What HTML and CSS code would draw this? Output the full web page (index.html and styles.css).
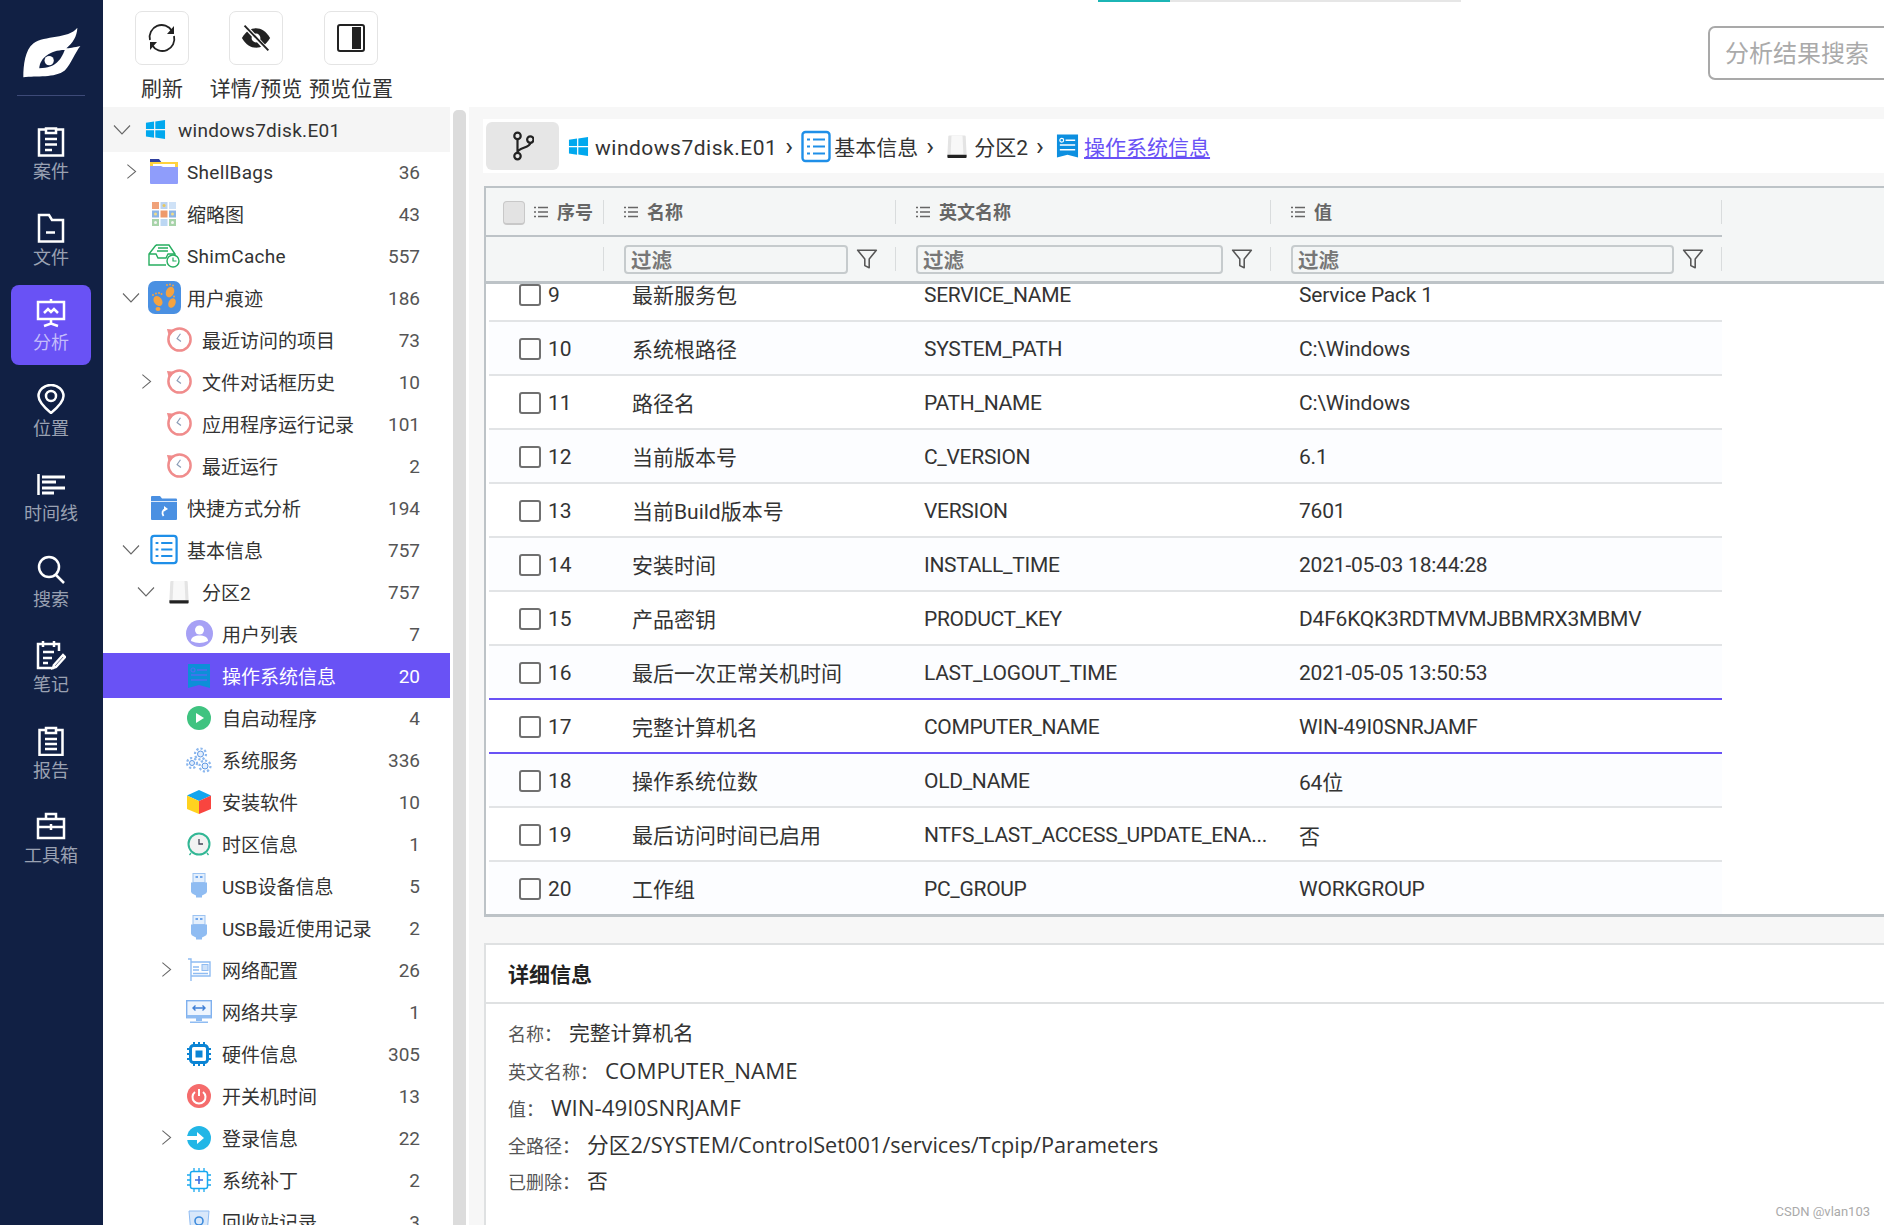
FILE: index.html
```html
<!DOCTYPE html>
<html lang="zh-CN">
<head>
<meta charset="utf-8">
<title>分析</title>
<link rel="stylesheet" href="styles.css">
</head>
<body>
<svg class="defs" aria-hidden="true">
  <symbol id="i-win" viewBox="0 0 22 22"><path fill="#00a8ee" d="M1 4l8.500-1.300v7.800H1zM10.800 2.500L21 1v9.500H10.800zM1 11.800h8.500v7.800L1 18.400zM10.800 11.800H21V21l-10.200-1.500z"/></symbol>
  <symbol id="i-disk" viewBox="0 0 24 26"><path fill="#e4e4e4" d="M3.500 1h17a1 1 0 0 1 1 1l1 20h-21l1-20a1 1 0 0 1 1-1z"/><path fill="#f8f8f8" d="M6 1h12l1 21H5z"/><path fill="#222" d="M1.500 22h21v2.500a1 1 0 0 1-1 1h-19a1 1 0 0 1-1-1z"/></symbol>
  <symbol id="i-list" viewBox="0 0 30 32"><rect x="1.500" y="1.500" width="27" height="29" rx="3" fill="#fff" stroke="#1f8fe8" stroke-width="2.400"/><path stroke="#1f8fe8" stroke-width="2" d="M6 9h3M12 9h12M6 16h3M12 16h12M6 23h3M12 23h12"/></symbol>
  <symbol id="i-book" viewBox="0 0 24 24"><path fill="#0d8fe0" d="M1 0h22v24l-11-3-11 3z"/><circle cx="6" cy="6" r="2" fill="none" stroke="#fff" stroke-width="1.200"/><path stroke="#fff" stroke-width="1.500" d="M10 6h10M4 11h16M4 16h16"/></symbol>
  <symbol id="i-book-sel" viewBox="0 0 24 24"><path fill="#0d8fd8" d="M1 0h22v24l-11-3-11 3z"/><circle cx="6" cy="6" r="2" fill="none" stroke="#4f6ff0" stroke-width="1.200"/><path stroke="#4f6ff0" stroke-width="1.500" d="M10 6h10M4 11h16M4 16h16"/></symbol>
  <symbol id="i-hist" viewBox="0 0 28 28"><circle cx="14" cy="14" r="11.500" fill="#fff" stroke="#f08c8c" stroke-width="2.600"/><path fill="#f08c8c" d="M1 3l8 1-6 7z"/><path fill="none" stroke="#8a9bb5" stroke-width="1.200" d="M15 8l-3.500 5 4 3"/></symbol>
  <symbol id="i-usb" viewBox="3 .5 18 25"><rect x="6" y="1" width="12" height="9" fill="#e4effc" stroke="#9cc3f2"/><rect x="8.500" y="3.500" width="2.500" height="2" fill="#6ea6ec"/><rect x="13" y="3.500" width="2.500" height="2" fill="#6ea6ec"/><path fill="#8fbcf2" d="M4 10h16v9q0 2-3 3l-2 1v2H9v-2l-2-1q-3-1-3-3z"/></symbol>
  <symbol id="i-lines" viewBox="0 0 14 12"><path stroke="#666" stroke-width="1.500" d="M0 1.500h2M4 1.500h10M0 6h2M4 6h10M0 10.500h2M4 10.500h10"/></symbol>
  <symbol id="i-funnel" viewBox="0 0 20 20"><path fill="none" stroke="#555" stroke-width="1.400" stroke-linejoin="round" d="M1.500 2h17l-6.500 8v8l-4-2v-6z"/></symbol>
  <symbol id="i-chev-r" viewBox="0 0 12 18"><path fill="none" stroke="#666" stroke-width="1.100" d="M1.500 1.500l9 7.500-9 7.500"/></symbol>
  <symbol id="i-chev-d" viewBox="0 0 18 12"><path fill="none" stroke="#666" stroke-width="1.100" d="M1 1.500l8 8.500 8-8.500"/></symbol>
</svg>

<aside class="nav">
  <svg class="logo" viewBox="60 75 190 165"><path fill="#fff" d="M70 232C70 195 75 150 100 130 135 105 205 118 233 83 232 110 218 130 200 145 205 145 225 142 242 138 225 160 215 190 195 212 165 235 110 228 70 232Z"/><path fill="#112044" d="M118 205C120 175 150 150 195 150 185 175 170 205 118 205Z"/><circle cx="148" cy="182" r="14" fill="#fff"/></svg>
  <div class="nav-rule"></div>
  <div class="nav-item">
    <svg class="nav-icon" viewBox="0 0 30 30"><path class="ns" d="M10 2.500H3v26h24v-26h-7M10 1.500h10V6H10zM9 12h12M9 17.500h12M9 23h7"/></svg>
    <span>案件</span>
  </div>
  <div class="nav-item">
    <svg class="nav-icon" viewBox="0 0 30 30"><path class="ns" d="M3 28.500V2h10l3 5h11v21.500zM10 19.500h9"/></svg>
    <span>文件</span>
  </div>
  <div class="nav-item active">
    <svg class="nav-icon" viewBox="0 0 30 30"><path class="ns" d="M2 4h26v17H2zM15 1v3M15 21v6M8 28l7-2.500 7 2.500M8 15l4-4 3 3 3-3 4 4"/></svg>
    <span>分析</span>
  </div>
  <div class="nav-item">
    <svg class="nav-icon" viewBox="0 0 30 30"><path class="ns" d="M15 29C9 24 2.500 18 2.500 12a12.500 11 0 0 1 25 0c0 6-6.500 12-12.500 17z"/><circle class="ns" cx="15" cy="12" r="5"/></svg>
    <span>位置</span>
  </div>
  <div class="nav-item">
    <svg class="nav-icon" viewBox="0 0 30 30"><path class="ns" d="M2.500 5v21"/><path class="ns thick" d="M6 8h23M6 13h14M6 19h23M6 24h12"/></svg>
    <span>时间线</span>
  </div>
  <div class="nav-item">
    <svg class="nav-icon" viewBox="0 0 30 30"><circle class="ns" cx="13" cy="12" r="10"/><path class="ns" d="M20 20l8 8"/></svg>
    <span>搜索</span>
  </div>
  <div class="nav-item">
    <svg class="nav-icon" viewBox="0 0 30 30"><path class="ns" d="M23 11V4H2v24h16M7 1v6M18 1v6M7 12h11M7 18h9M7 23h5M18 25l9-10 2 2-9 10-3 1z"/></svg>
    <span>笔记</span>
  </div>
  <div class="nav-item">
    <svg class="nav-icon" viewBox="0 0 30 30"><path class="ns" d="M10 4H3.500v25h23V4H20M10 2h10v5H10zM9 13h12M9 18h12M9 23h12"/></svg>
    <span>报告</span>
  </div>
  <div class="nav-item">
    <svg class="nav-icon" viewBox="0 0 30 30"><path class="ns" d="M2 8h26v19H2zM10 8V3h10v5M2 16h26M15 13v6"/></svg>
    <span>工具箱</span>
  </div>
</aside>

<main class="main">
  <div class="tabline"><i class="tab-on"></i><i class="tab-off"></i></div>
  <header class="toolbar">
    <div class="tools">
      <div class="tool tool-a">
        <div class="tool-btn"><svg viewBox="0 0 30 30"><path fill="none" stroke="#222" stroke-width="1.800" d="M3 17A12 12 0 0 1 25 8M27 13A12 12 0 0 1 5 22"/><path fill="#222" d="M27 3v8h-7zM3 27v-8h7z"/></svg></div>
        <span>刷新</span>
      </div>
      <div class="tool tool-b">
        <div class="tool-btn"><svg viewBox="0 0 34 30"><path fill="#222" d="M1 15C6 7 11 4 17 4s11 3 16 11c-5 8-10 11-16 11S6 23 1 15z"/><circle cx="17" cy="15" r="5" fill="#fff"/><path stroke="#fff" stroke-width="5" d="M5 2l24 26"/><path stroke="#222" stroke-width="2.200" d="M4 1l27 28"/></svg></div>
        <span>详情/预览</span>
      </div>
      <div class="tool tool-c">
        <div class="tool-btn"><svg viewBox="0 0 30 30"><rect x="2" y="2" width="26" height="26" rx="2" fill="none" stroke="#222" stroke-width="2"/><rect x="16" y="4" width="9" height="22" fill="#222"/></svg></div>
        <span>预览位置</span>
      </div>
    </div>
    <div class="search">分析结果搜索</div>
  </header>

  <div class="content">
    <section class="tree">
      <div class="row l0 head"><svg class="chev-d"><use href="#i-chev-d"/></svg><span class="ico"><svg class="s21"><use href="#i-win"/></svg></span><span class="name latin">windows7disk.E01</span></div>

      <div class="row l1"><svg class="chev-r"><use href="#i-chev-r"/></svg><span class="ico"><svg class="s30" viewBox="0 0 30 26"><path fill="#2f3f9e" d="M1 0h9l3 4H1z"/><path fill="#ffd23f" d="M1 3h28v5H1z"/><path fill="#fff" d="M4 5h22v4H4z"/><path fill="#8f9dfb" d="M1 7h11l2 1h15v16a1 1 0 0 1-1 1H2a1 1 0 0 1-1-1z"/></svg></span><span class="name latin">ShellBags</span><span class="count">36</span></div>

      <div class="row l1"><svg class="chev-none"></svg><span class="ico"><svg class="s26" viewBox="0 0 26 26"><g><rect x="1" y="1" width="7" height="7" fill="#f0a27a"/><rect x="9.500" y="1" width="7" height="7" fill="#bcd3ef"/><rect x="18" y="1" width="7" height="7" fill="#cfe2f7"/><rect x="1" y="9.500" width="7" height="7" fill="#8db6e6"/><rect x="9.500" y="9.500" width="7" height="7" fill="#ee9a6c"/><rect x="18" y="9.500" width="7" height="7" fill="#8db6e6"/><rect x="1" y="18" width="7" height="7" fill="#a7d3a9"/><rect x="9.500" y="18" width="7" height="7" fill="#bcd7f3"/><rect x="18" y="18" width="7" height="7" fill="#a7d3a9"/></g><circle cx="13" cy="4.500" r="1.500" fill="#e9c75c"/><circle cx="4.500" cy="13" r="1.500" fill="#f0dc88"/><circle cx="21.500" cy="13" r="1.500" fill="#f0dc88"/><circle cx="4.500" cy="21.500" r="1.500" fill="#f4f4f4"/><circle cx="21.500" cy="21.500" r="1.500" fill="#f4f4f4"/></svg></span><span class="name">缩略图</span><span class="count">43</span></div>

      <div class="row l1"><svg class="chev-none"></svg><span class="ico"><svg class="s32" viewBox="0 0 32 24"><path fill="none" stroke="#27ae60" stroke-width="1.400" d="M8 1h13l6 9v4M8 1L1 10v11h17M1 10h7l2 4h8l2-4h7M10 4h10M9 7h11"/><circle cx="25" cy="17" r="6" fill="#fff" stroke="#27ae60" stroke-width="1.400"/><path fill="none" stroke="#27ae60" stroke-width="1.200" d="M25 13.500V17h3.500"/></svg></span><span class="name latin">ShimCache</span><span class="count">557</span></div>

      <div class="row l1"><svg class="chev-d"><use href="#i-chev-d"/></svg><span class="ico"><svg class="s33" viewBox="0 0 33 33"><rect width="33" height="33" rx="7" fill="#4a90e2"/><g fill="#f5a341"><ellipse cx="10" cy="20" rx="4" ry="5.500" transform="rotate(-35 10 20)"/><circle cx="5" cy="14" r="1"/><circle cx="8" cy="12.500" r="1"/><circle cx="11" cy="12" r="1"/><circle cx="13.500" cy="13" r="1"/><ellipse cx="22" cy="11" rx="4" ry="5.500" transform="rotate(25 22 11)"/><circle cx="19" cy="4" r="1"/><circle cx="22" cy="3.500" r="1"/><circle cx="25" cy="4.500" r="1"/><ellipse cx="24" cy="22" rx="3.500" ry="5" transform="rotate(25 24 22)"/><circle cx="26" cy="15.500" r="1"/><ellipse cx="10" cy="28" rx="2.500" ry="2"/></g></svg></span><span class="name">用户痕迹</span><span class="count">186</span></div>

      <div class="row l2"><svg class="chev-none"></svg><span class="ico"><svg class="s26h"><use href="#i-hist"/></svg></span><span class="name">最近访问的项目</span><span class="count">73</span></div>
      <div class="row l2"><svg class="chev-r"><use href="#i-chev-r"/></svg><span class="ico"><svg class="s26h"><use href="#i-hist"/></svg></span><span class="name">文件对话框历史</span><span class="count">10</span></div>
      <div class="row l2"><svg class="chev-none"></svg><span class="ico"><svg class="s26h"><use href="#i-hist"/></svg></span><span class="name">应用程序运行记录</span><span class="count">101</span></div>
      <div class="row l2"><svg class="chev-none"></svg><span class="ico"><svg class="s26h"><use href="#i-hist"/></svg></span><span class="name">最近运行</span><span class="count">2</span></div>

      <div class="row l1"><svg class="chev-none"></svg><span class="ico"><svg class="s26" viewBox="0 0 26 24"><path fill="#4a90e2" d="M0 1a1 1 0 0 1 1-1h8l2 2.500h14a1 1 0 0 1 1 1V23a1 1 0 0 1-1 1H1a1 1 0 0 1-1-1z"/><path stroke="#fff" stroke-width=".8" d="M0 5.500h26"/><path fill="none" stroke="#fff" stroke-width="1.800" d="M12.500 20c-2-3-1-6 2-7"/><path fill="#fff" d="M13 10l4 3-4 2.500z"/></svg></span><span class="name">快捷方式分析</span><span class="count">194</span></div>

      <div class="row l1"><svg class="chev-d"><use href="#i-chev-d"/></svg><span class="ico"><svg class="s28x32"><use href="#i-list"/></svg></span><span class="name">基本信息</span><span class="count">757</span></div>

      <div class="row l2"><svg class="chev-d"><use href="#i-chev-d"/></svg><span class="ico"><svg class="s22"><use href="#i-disk"/></svg></span><span class="name">分区2</span><span class="count">757</span></div>

      <div class="row l3"><svg class="chev-none"></svg><span class="ico"><svg class="s27" viewBox="0 0 27 27"><circle cx="13.500" cy="13.500" r="13.500" fill="#a6a0f5"/><circle cx="13.500" cy="10" r="4.500" fill="#fff"/><path fill="#fff" d="M5 21c0-4 4-5.500 8.500-5.500S22 17 22 21q-8.500 4-17 0z"/></svg></span><span class="name">用户列表</span><span class="count">7</span></div>

      <div class="row l3 selected"><svg class="chev-none"></svg><span class="ico"><svg class="s24"><use href="#i-book-sel"/></svg></span><span class="name">操作系统信息</span><span class="count">20</span></div>

      <div class="row l3"><svg class="chev-none"></svg><span class="ico"><svg class="s24" viewBox="0 0 24 24"><circle cx="12" cy="12" r="12" fill="#3fc380"/><path fill="#fff" d="M9 7l8 5-8 5z"/></svg></span><span class="name">自启动程序</span><span class="count">4</span></div>

      <div class="row l3"><svg class="chev-none"></svg><span class="ico"><svg class="s26" viewBox="0 0 26 26"><g fill="none" stroke="#8db8ee" stroke-width="2.200" stroke-dasharray="2.200 2"><circle cx="14.500" cy="7" r="5.500"/><circle cx="6" cy="16" r="5"/><circle cx="19" cy="19" r="5.500"/></g><g fill="#e4effc" stroke="#5d97e4"><circle cx="14.500" cy="7" r="3"/><circle cx="6" cy="16" r="2.500"/><circle cx="19" cy="19" r="3"/></g></svg></span><span class="name">系统服务</span><span class="count">336</span></div>

      <div class="row l3"><svg class="chev-none"></svg><span class="ico"><svg class="s24" viewBox="0 0 24 24"><path fill="#12a5ee" d="M12 0l12 5.500L12 11 0 5.500z"/><path fill="#ffd21f" d="M0 5.500L12 11v13L0 19z"/><path fill="#f9453f" d="M24 5.500L12 11v13l12-5z"/></svg></span><span class="name">安装软件</span><span class="count">10</span></div>

      <div class="row l3"><svg class="chev-none"></svg><span class="ico"><svg class="s24" viewBox="0 0 24 24"><circle cx="12" cy="12" r="10.500" fill="#f2f2f2" stroke="#32b795" stroke-width="2"/><path fill="none" stroke="#445" stroke-width="1.300" d="M12 7v5h4"/><path stroke="#32b795" stroke-width="1.300" d="M4 21l-1.500 2M20 21l1.500 2"/></svg></span><span class="name">时区信息</span><span class="count">1</span></div>

      <div class="row l3"><svg class="chev-none"></svg><span class="ico"><svg class="s-usb"><use href="#i-usb"/></svg></span><span class="name">USB设备信息</span><span class="count">5</span></div>
      <div class="row l3"><svg class="chev-none"></svg><span class="ico"><svg class="s-usb"><use href="#i-usb"/></svg></span><span class="name">USB最近使用记录</span><span class="count">2</span></div>

      <div class="row l3"><svg class="chev-r"><use href="#i-chev-r"/></svg><span class="ico"><svg class="s24" viewBox="0 0 24 24"><path fill="none" stroke="#8fbcf2" stroke-width="1.400" d="M1 1h3v22M4 4h19v14H4"/><rect x="15" y="6.500" width="6" height="6" fill="#cfe2f9" stroke="#8fbcf2"/><path stroke="#8fbcf2" stroke-width="1.300" d="M6 9h6M6 12h6M6 15.500h15"/></svg></span><span class="name">网络配置</span><span class="count">26</span></div>

      <div class="row l3"><svg class="chev-none"></svg><span class="ico"><svg class="s26" viewBox="0 0 26 24"><rect x=".7" y=".7" width="24.600" height="17" fill="#eef5fe" stroke="#7fb0ee" stroke-width="1.400"/><path fill="#8fbcf2" d="M.7 15h24.600v3H.7zM10 18h6v3h-6zM4 21.500h18V23H4z"/><path fill="none" stroke="#3f7fd6" stroke-width="1.400" d="M7 8h12M9.500 5.500L7 8l2.500 2.500M16.500 5.500L19 8l-2.500 2.500"/></svg></span><span class="name">网络共享</span><span class="count">1</span></div>

      <div class="row l3"><svg class="chev-none"></svg><span class="ico"><svg class="s24" viewBox="0 0 24 24"><rect x="3.500" y="3.500" width="17" height="17" rx="3" fill="#fff" stroke="#0b84d4" stroke-width="3"/><rect x="8.500" y="8.500" width="7" height="7" fill="#0b84d4"/><path stroke="#0b84d4" stroke-width="2" d="M7 0v3M12 0v3M17 0v3M7 21v3M12 21v3M17 21v3M0 7h3M0 12h3M0 17h3M21 7h3M21 12h3M21 17h3"/></svg></span><span class="name">硬件信息</span><span class="count">305</span></div>

      <div class="row l3"><svg class="chev-none"></svg><span class="ico"><svg class="s24" viewBox="0 0 24 24"><circle cx="12" cy="12" r="12" fill="#f56c6c"/><path fill="none" stroke="#fff" stroke-width="2" d="M8 8a6.500 6.500 0 1 0 8 0M12 5v7"/></svg></span><span class="name">开关机时间</span><span class="count">13</span></div>

      <div class="row l3"><svg class="chev-r"><use href="#i-chev-r"/></svg><span class="ico"><svg class="s24" viewBox="0 0 24 24"><circle cx="12" cy="12" r="12" fill="#22b6e6"/><path fill="#fff" d="M0 10h10V6l7 6-7 6v-4H0z"/></svg></span><span class="name">登录信息</span><span class="count">22</span></div>

      <div class="row l3"><svg class="chev-none"></svg><span class="ico"><svg class="s24" viewBox="0 0 24 24"><rect x="3.500" y="3.500" width="17" height="17" rx="2" fill="#fff" stroke="#18a8f0" stroke-width="1.500"/><path stroke="#18a8f0" stroke-width="1.300" d="M7 0v3M12 0v3M17 0v3M7 21v3M12 21v3M17 21v3M0 7h3M0 12h3M0 17h3M21 7h3M21 12h3M21 17h3"/><path stroke="#3c6fe0" stroke-width="1.600" d="M8 12h8M12 8v8"/></svg></span><span class="name">系统补丁</span><span class="count">2</span></div>

      <div class="row l3"><svg class="chev-none"></svg><span class="ico"><svg class="s24" viewBox="0 0 24 24"><path fill="#d9e8fa" stroke="#8fbcf2" d="M2 1h20l-2 23H4z"/><circle cx="12" cy="11" r="4" fill="none" stroke="#3d8bdc" stroke-width="1.600"/></svg></span><span class="name">回收站记录</span><span class="count">3</span></div>
    </section>

    <div class="scrollbar"></div>

    <section class="work">
      <nav class="crumbs">
        <div class="branch"><svg viewBox="0 0 24 32"><g fill="none" stroke="#222" stroke-width="2.400"><circle cx="6" cy="5" r="3.500"/><circle cx="6" cy="27" r="3.500"/><circle cx="20" cy="9" r="3.500"/><path d="M6 8.500v15M20 12.500c0 6-14 5-14 11"/></g></svg></div>
        <svg class="c-win"><use href="#i-win"/></svg><span class="c-t c-latin">windows7disk.E01</span><span class="c-s c-s1">›</span>
        <svg class="c-list"><use href="#i-list"/></svg><span class="c-t">基本信息</span><span class="c-s">›</span>
        <svg class="c-disk"><use href="#i-disk"/></svg><span class="c-t c-gap">分区2</span><span class="c-s">›</span>
        <svg class="c-book"><use href="#i-book"/></svg><a class="c-link">操作系统信息</a>
      </nav>

      <div class="table">
        <div class="thead">
          <div class="hrow">
            <div class="c0 hc"><i class="hbox"></i><svg class="lines"><use href="#i-lines"/></svg><span>序号</span></div>
            <div class="c1 hc"><svg class="lines"><use href="#i-lines"/></svg><span>名称</span></div>
            <div class="c2 hc"><svg class="lines"><use href="#i-lines"/></svg><span>英文名称</span></div>
            <div class="c3 hc"><svg class="lines"><use href="#i-lines"/></svg><span>值</span></div>
          </div>
          <div class="frow">
            <div class="c0 fc"></div>
            <div class="c1 fc"><div class="finput">过滤</div><svg class="funnel"><use href="#i-funnel"/></svg></div>
            <div class="c2 fc"><div class="finput">过滤</div><svg class="funnel"><use href="#i-funnel"/></svg></div>
            <div class="c3 fc"><div class="finput">过滤</div><svg class="funnel"><use href="#i-funnel"/></svg></div>
          </div>
        </div>
        <div class="tbody">
          <div class="trow"><div class="b0 cell"><i class="box"></i>9</div><div class="c1 cell">最新服务包</div><div class="c2 cell">SERVICE_NAME</div><div class="c3 cell">Service Pack 1</div></div>
          <div class="trow"><div class="b0 cell"><i class="box"></i>10</div><div class="c1 cell">系统根路径</div><div class="c2 cell">SYSTEM_PATH</div><div class="c3 cell">C:\Windows</div></div>
          <div class="trow"><div class="b0 cell"><i class="box"></i>11</div><div class="c1 cell">路径名</div><div class="c2 cell">PATH_NAME</div><div class="c3 cell">C:\Windows</div></div>
          <div class="trow"><div class="b0 cell"><i class="box"></i>12</div><div class="c1 cell">当前版本号</div><div class="c2 cell">C_VERSION</div><div class="c3 cell">6.1</div></div>
          <div class="trow"><div class="b0 cell"><i class="box"></i>13</div><div class="c1 cell">当前Build版本号</div><div class="c2 cell">VERSION</div><div class="c3 cell">7601</div></div>
          <div class="trow"><div class="b0 cell"><i class="box"></i>14</div><div class="c1 cell">安装时间</div><div class="c2 cell">INSTALL_TIME</div><div class="c3 cell">2021-05-03 18:44:28</div></div>
          <div class="trow"><div class="b0 cell"><i class="box"></i>15</div><div class="c1 cell">产品密钥</div><div class="c2 cell">PRODUCT_KEY</div><div class="c3 cell">D4F6KQK3RDTMVMJBBMRX3MBMV</div></div>
          <div class="trow before-sel"><div class="b0 cell"><i class="box"></i>16</div><div class="c1 cell">最后一次正常关机时间</div><div class="c2 cell">LAST_LOGOUT_TIME</div><div class="c3 cell">2021-05-05 13:50:53</div></div>
          <div class="trow sel"><div class="b0 cell"><i class="box"></i>17</div><div class="c1 cell">完整计算机名</div><div class="c2 cell">COMPUTER_NAME</div><div class="c3 cell">WIN-49I0SNRJAMF</div></div>
          <div class="trow"><div class="b0 cell"><i class="box"></i>18</div><div class="c1 cell">操作系统位数</div><div class="c2 cell">OLD_NAME</div><div class="c3 cell">64位</div></div>
          <div class="trow"><div class="b0 cell"><i class="box"></i>19</div><div class="c1 cell">最后访问时间已启用</div><div class="c2 cell">NTFS_LAST_ACCESS_UPDATE_ENA...</div><div class="c3 cell">否</div></div>
          <div class="trow"><div class="b0 cell"><i class="box"></i>20</div><div class="c1 cell">工作组</div><div class="c2 cell">PC_GROUP</div><div class="c3 cell">WORKGROUP</div></div>
        </div>
      </div>

      <section class="detail">
        <h2 class="d-title">详细信息</h2>
        <div class="d-body">
          <p class="d-line"><span class="d-k">名称：</span><span class="d-v d-cjk">完整计算机名</span></p>
          <p class="d-line"><span class="d-k">英文名称：</span><span class="d-v">COMPUTER_NAME</span></p>
          <p class="d-line"><span class="d-k">值：</span><span class="d-v">WIN-49I0SNRJAMF</span></p>
          <p class="d-line"><span class="d-k">全路径：</span><span class="d-v d-path">分区2/SYSTEM/ControlSet001/services/Tcpip/Parameters</span></p>
          <p class="d-line"><span class="d-k">已删除：</span><span class="d-v d-cjk">否</span></p>
        </div>
        <div class="mark">CSDN @vlan103</div>
      </section>
    </section>
  </div>
</main>
</body>
</html>
```
FILE: styles.css
```css
* { box-sizing: border-box; }
html, body { margin: 0; height: 1225px; overflow: hidden; }
body {
  display: flex;
  width: 1884px;
  font-family: "Roboto", "Noto Sans CJK SC", sans-serif;
  color: #333;
  background: #fff;
}
.defs { display: none; }
svg { display: block; flex: none; overflow: hidden; }

/* left navigation */
.nav { width: 103px; flex: none; background: #112044; display: flex; flex-direction: column; align-items: flex-start; padding-left: 11px; }
.logo { width: 63px; height: 55px; margin: 25px 0 0 9px; }
.nav-rule { width: 68px; height: 1px; background: #3d4a78; margin: 15px 0 18px 6px; }
.nav-item {
  width: 80px; height: 80px; margin-bottom: 5.5px; padding-top: 13px; border-radius: 8px;
  display: flex; flex-direction: column; align-items: center;
  color: #9aa1b2; font-size: 18px; line-height: 24px;
}
.nav-item.active { background: #6952f5; color: #c4bcfb; }
.nav-icon { width: 30px; height: 30px; margin-bottom: 3px; }
.ns { fill: none; stroke: #fff; stroke-width: 2.500; }
.thick { stroke-width: 3; }

/* main */
.main { flex: 1; min-width: 0; display: flex; flex-direction: column; height: 1225px; }
.tabline { height: 2px; flex: none; display: flex; margin-left: 995px; }
.tab-on { width: 72px; background: #1cb5b5; }
.tab-off { width: 291px; background: #e6e6e6; }
.toolbar { height: 105px; flex: none; display: flex; justify-content: space-between; align-items: flex-start; overflow: hidden; }
.tools { display: flex; font-size: 21px; color: #333; }
.tool { display: flex; flex-direction: column; align-items: center; padding-top: 9px; }
.tool-a { width: 84px; margin-left: 17px; }
.tool-b { width: 104px; }
.tool-c { width: 86px; }
.tool-btn { width: 54px; height: 54px; border: 1px solid #e4e4e4; border-radius: 7px; display: flex; align-items: center; justify-content: center; }
.tool-btn svg { width: 30px; height: 30px; }
.tool span { margin-top: 10px; line-height: 28px; white-space: nowrap; }
.search {
  width: 200px; height: 54px; margin-top: 24px; margin-right: -24px; padding-left: 15px;
  border: 2px solid #a9a9a9; border-radius: 7px; font-size: 24px; line-height: 52px; color: #aaa; white-space: nowrap;
}

.content { flex: 1; display: flex; min-height: 0; }

/* tree */
.tree { width: 347px; flex: none; overflow: hidden; font-size: 19px; }
.row { height: 45px; margin-bottom: -3px; display: flex; align-items: center; padding-right: 30px; position: relative; white-space: nowrap; }
.l0 { padding-left: 8px; }
.l1 { padding-left: 17px; }
.l2 { padding-left: 32px; }
.l3 { padding-left: 52px; }
.head { background: #f5f5f5; }
.selected { background: #6952f5; color: #fff; }
.selected .count { color: #fff; }
.chev-r { width: 11px; height: 17px; margin: 0 5.500px 0 5.500px; }
.chev-d { width: 18px; height: 12px; margin: 0 2px; }
.chev-none { width: 22px; height: 1px; }
.ico { width: 34px; flex: none; margin: 0 6px 0 5px; display: flex; justify-content: center; align-items: center; }
.name { flex: 1; }
.latin { letter-spacing: .3px; padding-top: 2px; }
.count { color: #555; padding-top: 2px; }
.s21 { width: 21px; height: 21px; }
.s22 { width: 22px; height: 24px; }
.s24 { width: 24px; height: 24px; }
.s26 { width: 26px; height: 26px; }
.s26h { width: 27px; height: 27px; }
.s27 { width: 27px; height: 27px; }
.s28x32 { width: 28px; height: 31px; }
.s30 { width: 30px; height: 26px; }
.s32 { width: 32px; height: 24px; }
.s33 { width: 33px; height: 33px; }
.s-usb { width: 18px; height: 25px; }

.scrollbar { width: 13px; flex: none; margin: 3px 3px 0 3px; background: #dcdcdc; border-radius: 5px 5px 0 0; }

/* right side */
.work { flex: 1; min-width: 0; background: #f7f7f7; padding: 12px 0 0 14px; display: flex; flex-direction: column; font-size: 21px; }
.crumbs { height: 54px; flex: none; background: #fff; display: flex; align-items: center; padding-left: 3px; white-space: nowrap; margin-bottom: 13px; }
.branch { width: 73px; height: 48px; background: #e6e6e6; border-radius: 6px; display: flex; align-items: center; justify-content: center; margin-right: 9px; }
.branch svg { width: 22px; height: 30px; }
.c-win { width: 21px; height: 21px; margin-right: 6px; }
.c-t { color: #333; }
.c-latin { letter-spacing: .5px; padding-top: 3px; }
.c-gap { margin-left: 6px; }
.c-s { margin: 0 10px 0 8px; width: 10px; color: #333; font-size: 26px; line-height: 30px; }
.c-s1 { margin-right: 6px; }
.c-list { width: 30px; height: 33px; margin-right: 3px; }
.c-disk { width: 22px; height: 25px; }
.c-book { width: 23px; height: 24px; margin-right: 5px; }
.c-link { color: #6952f5; text-decoration: underline; }

/* table */
.table { height: 731px; flex: none; margin-left: 1px; border: solid #bdc3c7; border-width: 2px 0 3px 2px; background: #fff; overflow: hidden; }
.thead { background: #f4f6f6; border-bottom: 3px solid #bdc3c7; }
.c0 { width: 118px; }
.c1 { width: 292px; }
.c2 { width: 375px; }
.c3 { width: 451px; }
.b0 { width: 115px; }
.hrow { width: 1236px; height: 49px; display: flex; align-items: center; border-bottom: 2px solid #bdc3c7; }
.frow { width: 1236px; height: 44px; display: flex; align-items: center; }
.hc, .fc { display: flex; align-items: center; border-right: 1px solid #d9dcdd; }
.hc { height: 24px; padding-left: 20px; font-size: 18px; font-weight: 700; color: #666; }
.hc span { margin-top: -2px; }
.c0.hc { padding-left: 17px; }
.hbox { width: 22px; height: 24px; flex: none; margin-top: 2px; background: #e3e3e3; border: 1px solid #c8c8c8; border-bottom-width: 2px; border-radius: 4px; margin-right: 9px; }
.lines { width: 14px; height: 12px; margin-right: 9px; }
.fc { height: 24px; padding-left: 20px; }
.finput { height: 29px; flex: 1; border: 2px solid #c6cbcd; border-radius: 4px; font-size: 20.500px; font-weight: 700; line-height: 28px; padding-left: 5px; color: #777; background: #f4f6f6; overflow: hidden; }
.funnel { width: 22px; height: 22px; margin: 0 17px 0 8px; }
.tbody { height: 635px; overflow: hidden; }
.trow { width: 1233px; margin-left: 3px; height: 54px; padding-top: 1px; display: flex; align-items: center; border-bottom: 2px solid #e2e4e6; font-size: 21px; color: #333; background: #fff; }
.trow:first-child { margin-top: -16px; }
.trow:nth-child(even) { background: #fcfdff; }
.trow.before-sel, .trow.sel { border-bottom-color: #6952f5; }
.cell { padding-left: 28px; padding-right: 10px; white-space: nowrap; }
.c1.cell { padding-bottom: 2px; }
.c2.cell { letter-spacing: -.3px; }
.c3.cell { letter-spacing: -.2px; }
.b0.cell { padding-left: 30px; padding-right: 0; display: flex; align-items: center; }
.box { width: 22px; height: 22px; flex: none; border: 2px solid #707070; border-radius: 3px; margin-right: 7px; background: #fff; }

/* detail */
.detail { flex: 1; margin: 26px 0 0 1px; background: #fff; border: solid #dfe1e2; border-width: 2px 0 0 2px; position: relative; }
.d-title { margin: 0; height: 59px; border-bottom: 2px solid #dfe1e2; padding-left: 22px; font-size: 21px; font-weight: 700; line-height: 60px; color: #222; }
.d-body { padding: 11px 0 0 22px; }
.d-line { margin: 0; height: 37px; line-height: 37px; display: flex; align-items: baseline; }
.d-k { font-size: 18px; color: #555; margin-right: 7px; }
.d-v { font-family: "Open Sans", "Noto Sans CJK SC", sans-serif; font-size: 22.300px; color: #333; }
.d-path { font-size: 21.700px; }
.d-cjk { font-size: 20.800px; }
.mark { position: absolute; right: 14px; bottom: 6px; font-size: 13px; color: #aaa; }
```
